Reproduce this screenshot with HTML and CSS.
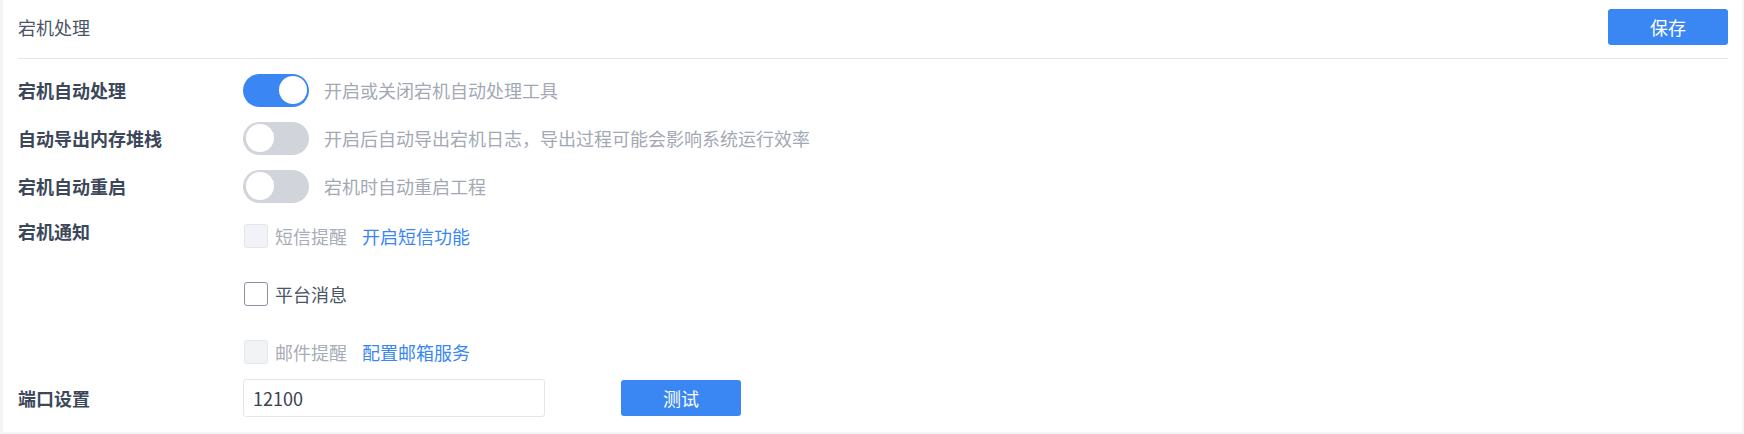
FILE: index.html
```html
<!DOCTYPE html>
<html lang="zh-CN">
<head>
  <meta charset="UTF-8">
  <meta name="viewport" content="width=device-width, initial-scale=1.0">
  <title>宕机处理</title>
  <link rel="stylesheet" href="styles.css">
</head>
<body>
  <div id="panel">
    <div class="panel-header">
      <div class="panel-title">宕机处理</div>
      <button class="btn">保存</button>
    </div>

    <div class="form">
      <div class="form-row">
        <div class="form-label">宕机自动处理</div>
        <div class="form-field">
          <span class="switch on"><span class="knob"></span></span>
          <span class="hint">开启或关闭宕机自动处理工具</span>
        </div>
      </div>
      <div class="form-row">
        <div class="form-label">自动导出内存堆栈</div>
        <div class="form-field">
          <span class="switch"><span class="knob"></span></span>
          <span class="hint">开启后自动导出宕机日志，导出过程可能会影响系统运行效率</span>
        </div>
      </div>
      <div class="form-row">
        <div class="form-label">宕机自动重启</div>
        <div class="form-field">
          <span class="switch"><span class="knob"></span></span>
          <span class="hint">宕机时自动重启工程</span>
        </div>
      </div>

      <div class="form-row notify-row">
        <div class="form-label">宕机通知</div>
        <div class="check-list">
          <div class="check-item disabled">
            <span class="checkbox"></span>
            <span class="check-text">短信提醒</span>
            <a class="link" href="#">开启短信功能</a>
          </div>
          <div class="check-item">
            <span class="checkbox"></span>
            <span class="check-text">平台消息</span>
          </div>
          <div class="check-item disabled">
            <span class="checkbox"></span>
            <span class="check-text">邮件提醒</span>
            <a class="link" href="#">配置邮箱服务</a>
          </div>
        </div>
      </div>

      <div class="form-row port-row">
        <div class="form-label">端口设置</div>
        <div class="form-field">
          <input class="text-input" type="text" value="12100">
          <button class="btn test-btn">测试</button>
        </div>
      </div>
    </div>
  </div>
</body>
</html>
```

FILE: styles.css
```css
html, body {
  margin: 0;
  font-family: "Noto Sans CJK SC", "Noto Sans", sans-serif;
  font-size: 18px;
  background-color: #f4f5f7;
}

#panel {
  background-color: #ffffff;
  margin: 0 2px 0 3px;
  height: 432px;
  padding: 0 14px 0 15px;
  box-sizing: border-box;
}

.panel-header {
  display: flex;
  justify-content: space-between;
  align-items: center;
  padding: 9px 0 13px;
  border-bottom: 1px solid #e6e8ec;
}

.panel-title {
  color: #4b5567;
  line-height: 24px;
}

.btn {
  font-family: inherit;
  font-size: 18px;
  width: 120px;
  height: 36px;
  border: none;
  border-radius: 3px;
  background-color: #3a87f3;
  color: #ffffff;
  cursor: pointer;
}

.form {
  padding-top: 7px;
}

.form-row {
  display: grid;
  grid-template-columns: 225px 1fr;
  align-items: center;
  height: 48px;
}

.form-label {
  font-weight: 700;
  color: #3d475a;
  line-height: 24px;
}

.form-field {
  display: flex;
  align-items: center;
}

.switch {
  position: relative;
  display: inline-block;
  width: 66px;
  height: 33px;
  border-radius: 17px;
  background-color: #d1d4da;
}

.switch.on {
  background-color: #3a87f3;
}

.knob {
  position: absolute;
  top: 2.5px;
  left: 2.5px;
  width: 28px;
  height: 28px;
  border-radius: 50%;
  background-color: #ffffff;
}

.switch.on .knob {
  left: auto;
  right: 2.5px;
}

.hint {
  margin-left: 15px;
  color: #a3a9b4;
  line-height: 24px;
}

.notify-row {
  height: auto;
  align-items: start;
}

.notify-row .form-label {
  margin-top: 9px;
}

.check-list {
  display: flex;
  flex-direction: column;
  gap: 34px;
  margin-top: 14px;
  padding-left: 1px;
}

.check-item {
  display: flex;
  align-items: center;
  height: 24px;
}

.checkbox {
  width: 22px;
  height: 22px;
  border: 1px solid #8a92a3;
  border-radius: 3px;
  background-color: #ffffff;
}

.check-text {
  margin-left: 7px;
  color: #4b5567;
  line-height: 24px;
}

.check-item.disabled .checkbox {
  border-color: #e3e6eb;
  background-color: #f2f3f6;
}

.check-item.disabled .check-text {
  color: #a8adb7;
}

.link {
  margin-left: 15px;
  color: #3a87f3;
  text-decoration: none;
  line-height: 24px;
}

.port-row {
  height: 38px;
  margin-top: 15px;
}

.text-input {
  font-family: inherit;
  font-size: 18px;
  color: #3b4252;
  width: 302px;
  height: 38px;
  box-sizing: border-box;
  padding: 0 9px;
  border: 1px solid #e4e6eb;
  border-radius: 3px;
  outline: none;
}

.test-btn {
  margin-left: 76px;
}
```
